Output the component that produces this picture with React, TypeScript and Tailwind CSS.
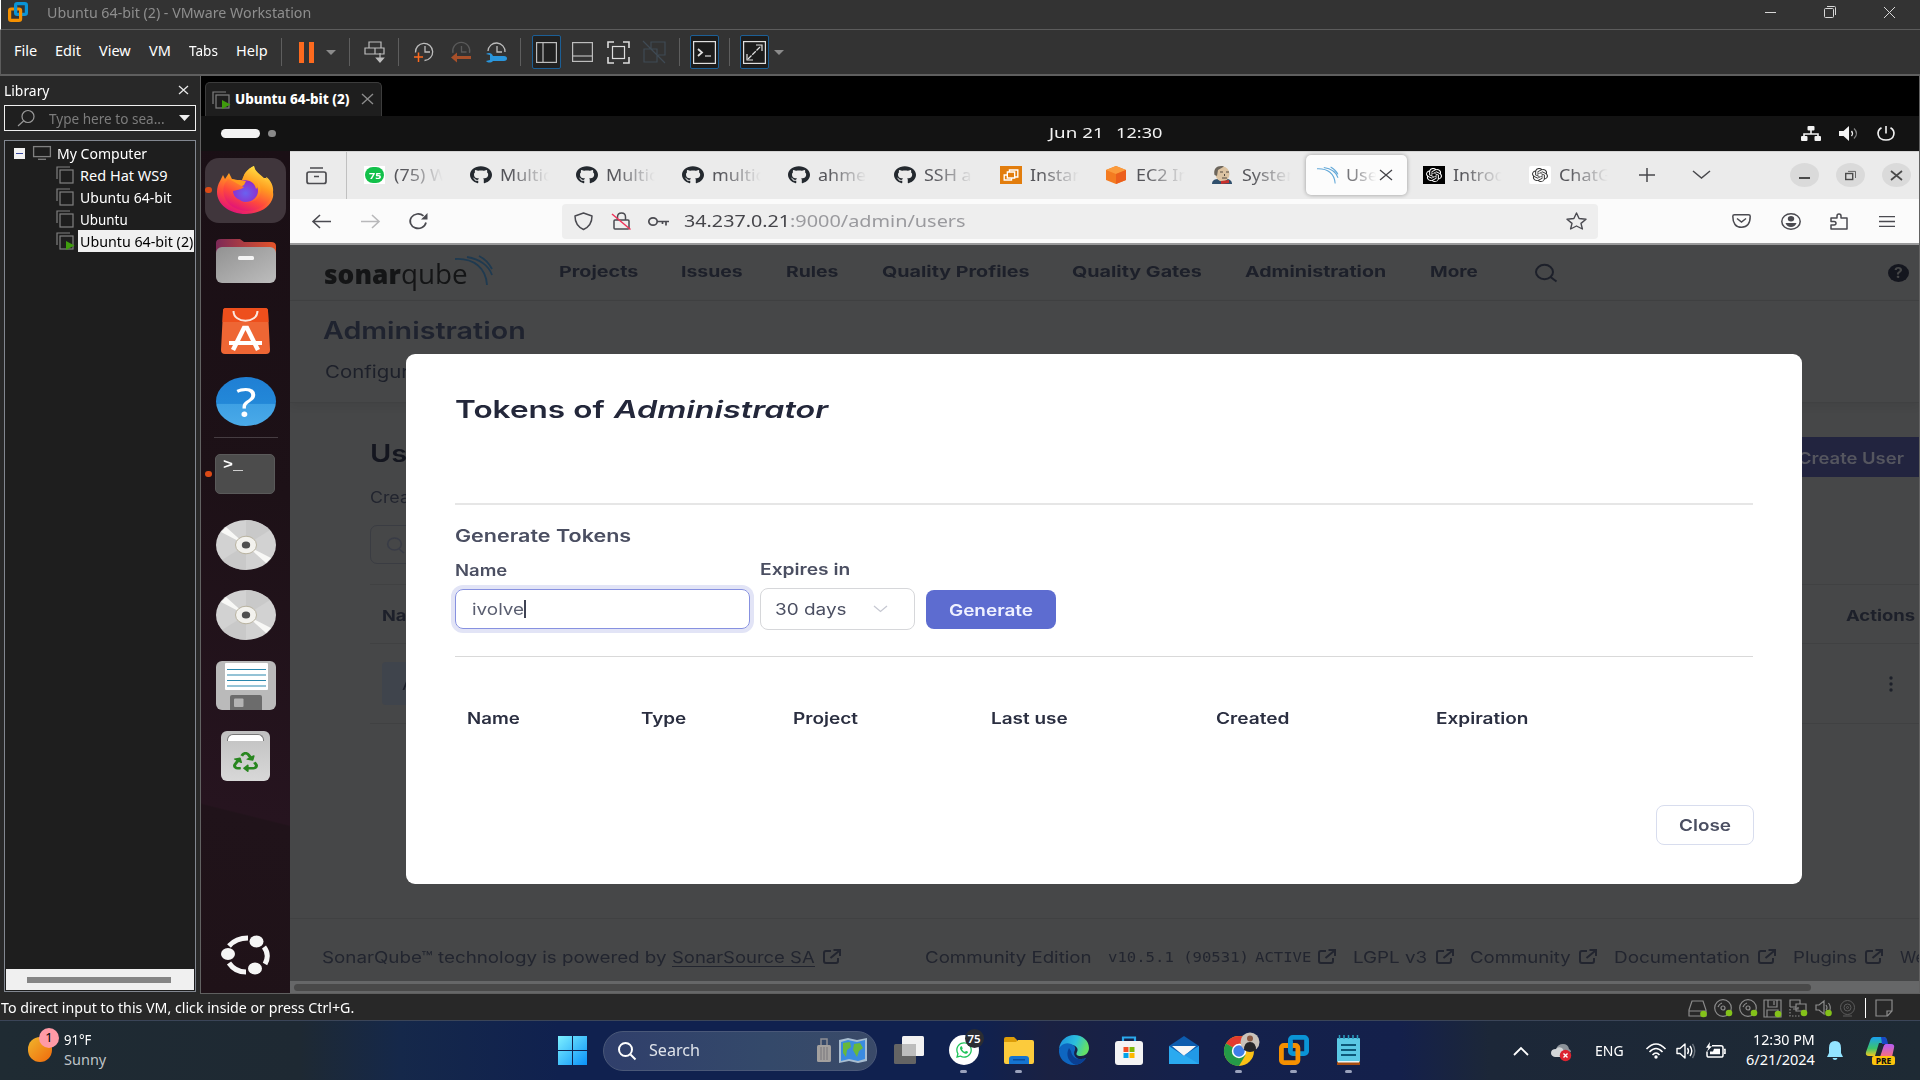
import React, { useLayoutEffect, useRef } from "react";
import { FaGithub, FaWhatsapp, FaRecycle } from "react-icons/fa";
import { SiOpenai } from "react-icons/si";

function T({ children, className = "" }: { children: React.ReactNode; className?: string }) {
  const outer = useRef<HTMLSpanElement>(null);
  const inner = useRef<HTMLSpanElement>(null);
  useLayoutEffect(() => {
    if (outer.current && inner.current) {
      const s = outer.current.clientWidth / inner.current.offsetWidth;
      inner.current.style.transform = `scaleX(${s})`;
    }
  }, []);
  return (
    <span ref={outer} className={"block shrink-0 whitespace-nowrap leading-none " + className}>
      <span ref={inner} className="inline-block origin-left whitespace-pre">{children}</span>
    </span>
  );
}

function Ico({ vb, className = "", children, sw = 1.5 }: { vb: string; className?: string; children: React.ReactNode; sw?: number }) {
  return (
    <svg viewBox={vb} preserveAspectRatio="none" fill="none" stroke="currentColor" strokeWidth={sw} className={"shrink-0 overflow-visible " + className}>
      {children}
    </svg>
  );
}

const VmLogo = ({ className }: { className: string }) => (
  <Ico vb="0 0 20 20" sw={3.2} className={className}>
    <rect x="7.6" y="1.6" width="10.8" height="10.8" rx="1.6" stroke="#0a94d6" />
    <rect x="1.6" y="7" width="11" height="11.4" rx="1.6" stroke="#f59000" />
    <path d="M7.6 9.5V4" stroke="#0a94d6" />
  </Ico>
);

const Sep = ({ className }: { className: string }) => <div className={"h-7 w-px shrink-0 bg-[#5e5e5e] " + className} />;
const Caret = ({ className }: { className: string }) => (
  <Ico vb="0 0 10 5" className={className}><path d="M0 0h10L5 5z" fill="currentColor" stroke="none" /></Ico>
);

function TitleBar() {
  return (
    <div className="flex h-[30px] shrink-0 items-center border-b border-l border-b-[#5c5c5c] border-l-white bg-[#333333] pb-1">
      <VmLogo className="mb-0.5 ml-[7px] h-5 w-5" />
      <T className="ml-[19px] w-[264px] text-[14.5px] text-[#8e8e8e]">Ubuntu 64-bit (2) - VMware Workstation</T>
      <div className="ml-auto mr-[25px] flex items-center gap-12 pb-px text-[#d8d8d8]">
        <Ico vb="0 0 11 11" sw={1} className="h-[11px] w-[11px]"><path d="M0 5.5h11" /></Ico>
        <Ico vb="0 0 12 12" sw={1} className="h-3 w-3"><rect x=".5" y="2.5" width="9" height="9" rx="1" /><path d="M3 .5h7.5a1 1 0 0 1 1 1V9" /></Ico>
        <Ico vb="0 0 11 11" sw={1} className="h-[11px] w-[11px]"><path d="M0 0l11 11M11 0L0 11" /></Ico>
      </div>
    </div>
  );
}

function MenuBar() {
  return (
    <div className="flex h-[46px] shrink-0 items-center border-b-2 border-l border-b-[#5f5f5f] border-l-[#5c5c5c] bg-[#333333] pt-1 text-[14.5px] text-white">
      <T className="mb-2 ml-[13px] w-[23px]">File</T>
      <T className="mb-2 ml-[18px] w-[26px]">Edit</T>
      <T className="mb-2 ml-[18px] w-8">View</T>
      <T className="mb-2 ml-[18px] w-[22px]">VM</T>
      <T className="mb-2 ml-[18px] w-[29px]">Tabs</T>
      <T className="mb-2 ml-[18px] w-8">Help</T>
      <div className="mb-1 flex items-center text-[#bdbdbd]">
        <Sep className="ml-[13px]" />
        <div className="ml-[17px] h-[21px] w-[5px] bg-[#fd6a1e]" />
        <div className="ml-[5px] h-[21px] w-[5px] bg-[#fd6a1e]" />
        <Caret className="ml-3 h-[5px] w-[10px] text-[#8b8b8b]" />
        <Sep className="ml-[13px]" />
        <Ico vb="0 0 21 22" sw={1.2} className="ml-3.5 h-[22px] w-[21px]">
          <path d="M5 7V1h12v6M1 7h10v6H1zM11 7h9v6h-9z" /><path d="M16 12v8M12.5 17l3.5 4 3.5-4z" fill="currentColor" />
        </Ico>
        <Sep className="ml-[13px]" />
        <Ico vb="0 0 20 20" sw={1.3} className="ml-[15px] h-5 w-5">
          <path d="M1.500 10.500a8.600 8.600 0 1 1 9 8" /><path d="M11 4v6h5" /><path d="M0 15h9M4.500 10.500V20" stroke="#fd6a1e" strokeWidth="1.500" />
        </Ico>
        <Ico vb="0 0 20 20" sw={1.3} className="ml-[17px] h-5 w-5">
          <path d="M2 11a8.500 8.500 0 1 1 16.500 0M10.500 4v6h5" stroke="#5a5a5a" /><path d="M5 15.500h15" stroke="#a8502a" strokeWidth="3" /><path d="M6 10.500v10L0 15.500z" fill="#a8502a" stroke="none" />
        </Ico>
        <Ico vb="0 0 21 20" sw={1.3} className="ml-[15px] h-5 w-[21px]">
          <path d="M2 9a8.500 8.500 0 1 1 17 1M11 4v6h5" /><path d="M0 12c3-2 6-1 7 2h11c4 0 4 5 0 5H7c-2 2-5 2-7 0l4-1v-5z" fill="#2a96dc" stroke="none" />
        </Ico>
        <Sep className="ml-[13px]" />
        <div className="ml-[11px] flex h-[34px] w-[29px] items-center justify-center rounded-[2px] border border-[#1c5f96] bg-[#212121]">
          <Ico vb="0 0 21 21" sw={1.2} className="h-[21px] w-[21px]"><rect x=".6" y=".6" width="19.800" height="19.800" /><path d="M7 1v19" /></Ico>
        </div>
        <Ico vb="0 0 21 20" sw={1.2} className="ml-[11px] h-5 w-[21px]"><rect x=".6" y=".6" width="19.800" height="18.800" /><path d="M1 14h19" /></Ico>
        <Ico vb="0 0 23 23" sw={1.6} className="ml-3.5 h-[23px] w-[23px] text-[#dddddd]"><path d="M1 7V1h6M16 1h6v6M22 16v6h-6M7 22H1v-6" /><rect x="5.500" y="5.500" width="12" height="12" strokeWidth="1.200" /></Ico>
        <Ico vb="0 0 23 22" sw={1.2} className="ml-[13px] h-[22px] w-[23px] text-[#3f4a54]"><path d="M8 8V1h14v13h-7M1 8h13v13H1zM0 0l22 22" /></Ico>
        <Sep className="ml-[13px]" />
        <div className="ml-[10px] flex h-[34px] w-[29px] items-center justify-center rounded-[2px] border border-[#1c5f96] bg-[#1c1c1c] text-[#e0e0e0]">
          <Ico vb="0 0 23 23" sw={1.2} className="h-[23px] w-[23px]"><rect x=".6" y=".6" width="21.800" height="21.800" /><path d="M5 8l4 3.500L5 15" strokeWidth="1.800" /><path d="M12 15h6" /></Ico>
        </div>
        <Sep className="ml-[10px]" />
        <div className="ml-[10px] flex h-[34px] w-[29px] items-center justify-center rounded-[2px] border border-[#1c5f96] bg-[#1c1c1c] text-[#e0e0e0]">
          <Ico vb="0 0 23 23" sw={1.2} className="h-[23px] w-[23px]"><rect x=".6" y=".6" width="21.800" height="21.800" /><path d="M13 4h6v6M10 19H4v-6" /><path d="M5 18L18 5" strokeDasharray="5 1" /></Ico>
        </div>
        <Caret className="ml-[5px] h-[5px] w-[10px] text-[#8b8b8b]" />
      </div>
    </div>
  );
}

const VmIcon = ({ on, className = "" }: { on?: boolean; className?: string }) => (
  <Ico vb="0 0 18 18" sw={1.2} className={"h-[18px] w-[18px] text-[#808080] " + className}>
    <path d="M1 13V1h13" /><rect x="4" y="4" width="13" height="13" />
    {on && <path d="M10 9l8.500 4.500-8.500 4.500z" fill="#3f9c0d" stroke="none" />}
  </Ico>
);

function Library() {
  return (
    <div className="flex w-[200px] shrink-0 flex-col bg-[#282828] px-1 pb-[2px] text-[14.5px] text-white">
      <div className="flex h-[29px] items-center">
        <T className="w-[45px]">Library</T>
        <Ico vb="0 0 9 9" sw={1.2} className="ml-[130px] h-[9px] w-[9px] pb-px text-[#e8e8e8]"><path d="M0 0l9 9M9 0L0 9" /></Ico>
      </div>
      <div className="flex h-[26px] w-[192px] items-center border border-[#f0f0f0] bg-[#1f1f1f]">
        <Ico vb="0 0 17 16" sw={1.2} className="ml-[13px] h-4 w-[17px] text-[#9a9a9a]"><circle cx="10" cy="6.500" r="6" /><path d="M5.500 11L0 16" /></Ico>
        <T className="ml-[14px] w-[116px] text-[#7c7c7c]">Type here to sea...</T>
        <Ico vb="0 0 11 6" className="ml-[14px] h-1.5 w-[11px]"><path d="M0 0h11L5.500 6z" fill="#f0f0f0" stroke="none" /></Ico>
      </div>
      <div className="mt-[9px] flex w-[192px] flex-1 flex-col border border-[#828790] bg-[#1e1e1e] pt-px">
        <div className="flex h-[22px] items-center">
          <div className="ml-[9px] flex h-[11px] w-[11px] items-center justify-center bg-[#f2f2f2]"><div className="h-px w-[7px] bg-[#3949a0]" /></div>
          <Ico vb="0 0 18 14" sw={1.3} className="ml-2 h-3.5 w-[18px] text-[#808080]"><rect x=".6" y=".6" width="16.800" height="10" /><path d="M5 13.300h8" /></Ico>
          <T className="ml-1.5 w-[90px]">My Computer</T>
        </div>
        <div className="flex h-[22px] items-center"><VmIcon className="ml-[51px]" /><T className="ml-1.5 w-[88px]">Red Hat WS9</T></div>
        <div className="flex h-[22px] items-center"><VmIcon className="ml-[51px]" /><T className="ml-1.5 w-[92px]">Ubuntu 64-bit</T></div>
        <div className="flex h-[22px] items-center"><VmIcon className="ml-[51px]" /><T className="ml-1.5 w-12">Ubuntu</T></div>
        <div className="flex h-[22px] items-center">
          <VmIcon on className="ml-[51px]" />
          <div className="ml-1 flex h-[22px] w-[116px] items-center bg-[#f0f0f0] pl-0.5 text-black"><T className="w-[113px]">Ubuntu 64-bit (2)</T></div>
        </div>
        <div className="mx-px mb-px mt-auto flex h-[21px] items-center bg-[#f0f0f0]"><div className="ml-[21px] h-1.5 w-36 bg-[#858585]" /></div>
      </div>
    </div>
  );
}

function Firefox() {
  return (
    <Ico vb="0 0 57 48" className="h-12 w-[57px]">
      <defs>
        <linearGradient id="ff1" x1=".8" y1="0" x2=".3" y2="1"><stop offset="0" stopColor="#fff04a" /><stop offset=".4" stopColor="#ff9a20" /><stop offset=".7" stopColor="#ff4a3c" /><stop offset="1" stopColor="#e0107c" /></linearGradient>
        <radialGradient id="ff2" cx=".5" cy=".6" r=".6"><stop offset="0" stopColor="#6a62f0" /><stop offset="1" stopColor="#9228c8" /></radialGradient>
      </defs>
      <g stroke="none">
        <path d="M3 15l3-6 2 4 4-6 3 6c4 1 7 1 10 1 2-6 6-11 12-14 1 7 6 9 9 12l3 0c6 6 8 14 7 19C54 41 42 48 29 48 12 48 0 38 0 26c0-4 1-8 3-11z" fill="url(#ff1)" />
        <ellipse cx="28.500" cy="25" rx="12.500" ry="11" fill="url(#ff2)" />
        <path d="M15 13c4 2 10 1 14 2l-2 4c-3 2-7 2-9 4-3 0-5-5-3-10z" fill="#ff9c1e" />
        <path d="M37 0c-7 3-12 9-10 14 6 0 11 3 12 9 3-3 2-6 1-8 5 5 5 13 0 18-4 4-13 5-17 1-5-2-8-6-7-9 3-1 8-1 11-4-4-1-9-6-16-8l-3 4c-4 8-1 20 10 25 16 8 36-1 38-16 1-6-3-13-7-15l1 5c-4-7-12-9-13-16z" fill="url(#ff1)" />
      </g>
    </Ico>
  );
}

const Disc = ({ className }: { className: string }) => (
  <Ico vb="0 0 60 50" className={"h-[50px] w-[60px] " + className}>
    <g stroke="none">
      <ellipse cx="30" cy="25" rx="30" ry="25" fill="#d2d2d2" />
      <path d="M30 25V0c9 0 18 4 24 10zM30 25v25c-9 0-18-4-24-10z" fill="#c4c4c4" opacity=".7" />
      <path d="M30 25L5 12l5-5zM30 25l25 13-5 5z" fill="#f8f8f6" />
      <ellipse cx="30" cy="25" rx="10.500" ry="8.800" fill="#f3f2ee" stroke="#b9b3a0" strokeWidth="1" />
      <ellipse cx="30" cy="25" rx="4.200" ry="3.500" fill="#505050" />
    </g>
  </Ico>
);

function Dock() {
  return (
    <div className="flex w-[89px] shrink-0 flex-col items-center bg-[linear-gradient(194deg,#1a0f15_0%,#1d1117_40%,#26141f_78%,#20131a_78.200%,#1f1218_100%)] pt-[7px]">
      <div className="flex w-full items-center">
        <div className="ml-1 h-[65px] w-[81px] shrink-0 rounded-[14px] bg-[#40363c] pl-0 pt-2">
          <div className="flex items-center"><div className="h-1.5 w-[7px] rounded-full bg-[#dc4a16]" /><div className="ml-[5px]"><Firefox /></div></div>
        </div>
      </div>
      <Ico vb="0 0 60 44" className="mt-4 h-11 w-[60px]">
        <defs>
          <linearGradient id="fo" x1="0" x2="1"><stop offset="0" stopColor="#7c2957" /><stop offset="1" stopColor="#e4542a" /></linearGradient>
          <linearGradient id="fg" x1="0" y1="0" x2="1" y2="1"><stop offset="0" stopColor="#929292" /><stop offset="1" stopColor="#bdbdbd" /></linearGradient>
        </defs>
        <path d="M0 4q0-4 5-4h19l4 3h27q5 0 5 4v20H0z" fill="url(#fo)" stroke="none" />
        <rect y="8" width="60" height="36" rx="6" fill="url(#fg)" stroke="none" />
        <rect x="22" y="17" width="16" height="4" rx="1.500" fill="#f4f4f4" stroke="none" />
      </Ico>
      <Ico vb="0 0 49 46" className="mt-[25px] h-[46px] w-[49px]">
        <path d="M5 0h39q3 0 3 3l2 39q0 4-4 4H4q-4 0-4-4L2 3q0-3 3-3z" fill="#ee6634" stroke="none" />
        <path d="M5 0h39q3 0 3 3l.5 11H1.500L2 3q0-3 3-3z" fill="#ee4f1c" stroke="none" />
        <path d="M12.500 3c0 13 24 13 24 0" stroke="#fbe9e0" strokeWidth="2" />
        <path d="M12 42L23 20h3l11 22" stroke="#fff" strokeWidth="4.500" /><path d="M8 35h33" stroke="#fff" strokeWidth="4" />
      </Ico>
      <div className="mt-[23px] flex h-[49px] w-[60px] items-center justify-center rounded-[50%] bg-[linear-gradient(#1f7fd4_0%,#2388d8_54%,#3ea0e4_55%,#4aaae8_100%)]">
        <T className="w-5 text-[40px] text-white">?</T>
      </div>
      <div className="mt-[11px] h-px w-16 bg-[#463d42]" />
      <div className="mt-4 flex w-full items-center">
        <div className="ml-1 h-1.5 w-[7px] rounded-full bg-[#dc4a16]" />
        <div className="ml-[3px] flex h-10 w-[60px] items-start rounded-[5px] border border-[#5a5a5a] bg-[#4c4c4c] pl-[7px] pt-[3px]">
          <T className="w-5 font-['Liberation_Mono'] text-[15px] font-bold text-white">&gt;_</T>
        </div>
      </div>
      <Disc className="mt-[26px]" />
      <Disc className="mt-5" />
      <Ico vb="0 0 60 49" className="mt-[21px] h-[49px] w-[60px]">
        <rect width="60" height="49" rx="6" fill="#bababa" stroke="none" />
        <rect x="9" y="2" width="43" height="27" rx="1" fill="#fff" stroke="none" />
        <path d="M11 8.500h39M11 14h39M11 19.500h39M11 25h39" stroke="#2a88ae" strokeWidth="1.200" />
        <path d="M14 49V36q0-2 2-2h28q2 0 2 2v13z" fill="#6c6c6c" stroke="none" /><rect x="18" y="37.500" width="9.500" height="8.500" rx="1" fill="#b4b4b4" stroke="none" />
      </Ico>
      <div className="mt-[21px] flex h-[50px] w-[49px] flex-col items-center rounded-[6px] bg-[linear-gradient(#c0c0c0,#d8d8d8)] pt-[3px]">
        <div className="h-[7px] w-[37px] rounded-t-[6px] border border-b-0 border-[#777777] bg-white" />
        <FaRecycle preserveAspectRatio="none" className="mt-[11px] h-5 w-[25px] text-[#28861f]" />
      </div>
      <Ico vb="0 0 49 40" sw={5} className="mb-[18px] mt-auto h-10 w-[49px] text-[#f5f5f5]">
        <path d="M8 11Q15 3 27 3M8 28q6 9 17 9M43 12q6 8 1 17" />
        <g fill="currentColor" stroke="none"><ellipse cx="7" cy="19" rx="7" ry="6" /><ellipse cx="35.500" cy="6.500" rx="7" ry="6" /><ellipse cx="34" cy="33.500" rx="7" ry="6" /></g>
      </Ico>
    </div>
  );
}

const Waves = ({ className }: { className: string }) => (
  <Ico vb="0 0 37 30" sw={1.8} className={className}><path d="M0 3c19-1 31 9 32 26M12 1c13 2 22 9 25 18M24 0c6 3 10 7 13 13" /></Ico>
);

const Label = ({ children, className = "w-[50px]" }: { children: React.ReactNode; className?: string }) => (
  <div className={"ml-2 shrink-0 overflow-hidden whitespace-nowrap text-[16px] text-[#55555a] [mask-image:linear-gradient(to_right,black_20%,transparent_98%)] " + className}>
    <span className="inline-block origin-left scale-x-[1.12] pb-0.5 leading-5">{children}</span>
  </div>
);
const Tab = ({ icon, label }: { icon: React.ReactNode; label: string }) => (
  <div className="flex w-[106px] shrink-0 items-center"><div className="w-[22px] shrink-0">{icon}</div><Label>{label}</Label></div>
);
const Gh = () => <FaGithub preserveAspectRatio="none" className="h-[18px] w-[22px] text-[#24292f]" />;

function BrowserTabs() {
  return (
    <div className="flex h-12 shrink-0 items-center border-t border-[#d4d4d4] bg-[#ebebeb] pb-px">
      <Ico vb="0 0 21 17" sw={1.7} className="ml-4 h-[17px] w-[21px] text-[#4c4c50]"><rect x="1" y="5" width="19" height="11.500" rx="2" /><path d="M4 1h13M8 9.500h5" /></Ico>
      <div className="-mb-px ml-[19px] h-12 w-px bg-[#c0c0c0]" />
      <div className="ml-[17px] flex">
        <Tab label="(75) W" icon={<div className="flex h-[18px] w-[21px] items-center justify-center bg-white"><div className="flex h-4 w-[19px] items-center justify-center rounded-full bg-[#12c04a]"><T className="w-3 text-[9px] font-bold text-white">75</T></div></div>} />
        <Tab label="Multic" icon={<Gh />} />
        <Tab label="Multic" icon={<Gh />} />
        <Tab label="multic" icon={<Gh />} />
        <Tab label="ahmed" icon={<Gh />} />
        <Tab label="SSH an" icon={<Gh />} />
        <Tab label="Instan" icon={<Ico vb="0 0 21 18" sw={1.3} className="h-[18px] w-[22px] bg-[#e27d0d] text-white"><path d="M9 6V4h8v7h-3M7 6h7v6H7zM7 9H4v5h7v-2" /></Ico>} />
        <Tab label="EC2 In" icon={<Ico vb="0 0 20 18" className="h-[18px] w-5"><g stroke="none"><path d="M10 0l10 4v10l-10 4L0 14V4z" fill="#f47b20" /><path d="M10 0l10 4-10 4L0 4z" fill="#fb9b3c" /><path d="M20 4v10l-10 4V8z" fill="#ec5f1c" /></g></Ico>} />
        <Tab label="System" icon={<Ico vb="0 0 20 18" className="h-[18px] w-5"><g stroke="none"><path d="M0 18c0-4 3-5 7-5h7c4 0 6 2 6 5z" fill="#2f4f6c" /><ellipse cx="10.500" cy="8" rx="7" ry="7.500" fill="#dcc3a2" /><path d="M2.500 9C1 2 6-1 12 .5L6 4l-1 6z" fill="#6d665c" /><path d="M9 15l8-1v3l-8 1z" fill="#c8302c" /><path d="M8 5.500h3v1H8zM14 5.500h3v1h-3zM12 8h1v2h-1zM10 11.500h5v1h-5z" fill="#544a40" /></g></Ico>} />
      </div>
      <div className="-ml-3 flex h-10 w-[101px] shrink-0 items-center rounded-[5px] bg-[#fcfcfc] shadow-[0_0_4px_rgba(0,0,0,0.35)]">
        <Waves className="ml-[11px] h-[17px] w-[21px] text-[#62a8d8]" />
        <Label className="w-[31px] opacity-80">Users</Label>
        <Ico vb="0 0 12 10" sw={1.3} className="ml-[3px] h-[10px] w-3 text-[#44444a]"><path d="M0 0l12 10M12 0L0 10" /></Ico>
      </div>
      <div className="ml-4 flex">
        <Tab label="Introd" icon={<div className="flex h-[18px] w-[22px] items-center justify-center bg-black"><SiOpenai preserveAspectRatio="none" className="h-3.5 w-4 text-white" /></div>} />
        <Tab label="ChatG" icon={<div className="flex h-[18px] w-[22px] items-center justify-center rounded-[2px] bg-white"><SiOpenai preserveAspectRatio="none" className="h-3.5 w-4 text-[#333333]" /></div>} />
      </div>
      <Ico vb="0 0 16 14" sw={1.5} className="ml-1 h-3.5 w-4 text-[#48484c]"><path d="M8 0v14M0 7h16" /></Ico>
      <Ico vb="0 0 17 8" sw={1.5} className="ml-[38px] h-2 w-[17px] text-[#48484c]"><path d="M0 0l8.500 7L17 0" /></Ico>
      <div className="ml-auto mr-2 flex gap-[17px] text-[#4a4a4a]">
        <div className="flex h-6 w-[29px] items-center justify-center rounded-[50%] bg-[#dadada]"><div className="mt-1.5 h-[1.5px] w-[11px] bg-[#4a4a4a]" /></div>
        <div className="flex h-6 w-[29px] items-center justify-center rounded-[50%] bg-[#dadada]"><Ico vb="0 0 11 9" sw={1.4} className="h-[9px] w-[11px]"><rect x=".7" y="2.500" width="7" height="6" /><path d="M3 .4h7.500V7" strokeWidth=".8" /></Ico></div>
        <div className="flex h-6 w-[29px] items-center justify-center rounded-[50%] bg-[#dadada]"><Ico vb="0 0 11 9" sw={1.7} className="h-[9px] w-[11px]"><path d="M0 0l11 9M11 0L0 9" /></Ico></div>
      </div>
    </div>
  );
}

function Toolbar() {
  return (
    <div className="flex h-[46px] shrink-0 items-center border-b-2 border-[#9a9a9b] bg-[#fbfbfb] text-[#4a4a50]">
      <Ico vb="0 0 19 13" sw={1.6} className="ml-[22px] h-[13px] w-[19px]"><path d="M19 6.500H1M8 0L1 6.500 8 13" /></Ico>
      <Ico vb="0 0 19 13" sw={1.6} className="ml-[30px] h-[13px] w-[19px] text-[#b8b8ba]"><path d="M0 6.500h18M11 0l7 6.500L11 13" /></Ico>
      <Ico vb="0 0 19 16" sw={1.7} className="ml-[29px] h-4 w-[19px]"><path d="M17 9.500A8 7.200 0 1 1 14.500 2.800" /><path d="M18.500 0v6.500H12z" fill="currentColor" stroke="none" /></Ico>
      <div className="ml-[134px] flex h-[35px] w-[1036px] items-center rounded-[4px] bg-[#eeeeee]">
        <Ico vb="0 0 19 18" sw={1.5} className="ml-3 h-[18px] w-[19px]"><path d="M9.500 1l8.500 3c0 7-3 11-8.500 13.500C4 15 1 11 1 4z" strokeLinejoin="round" /></Ico>
        <Ico vb="0 0 19 18" sw={1.5} className="ml-[19px] h-[18px] w-[19px]"><path d="M5.500 8V5q0-4 4-4t4 4v3" /><rect x="2" y="8" width="15" height="9" rx="1" /><path d="M0 2l18.500 15.500" stroke="#f0335a" /></Ico>
        <Ico vb="0 0 21 9" sw={1.7} className="ml-[17px] h-[9px] w-[21px]"><ellipse cx="5" cy="4.500" rx="4.200" ry="3.700" /><path d="M9 4.500h12M18 4.500v4M14.500 4.500v2.500" /></Ico>
        <T className="ml-[15px] w-[106px] text-[16px] text-[#45454a]">34.237.0.21</T>
        <T className="w-[175px] text-[16px] text-[#9a9a9e]">:9000/admin/users</T>
        <Ico vb="0 0 21 18" sw={1.4} className="ml-auto mr-[11px] h-[18px] w-[21px]"><path d="M10.500 1l2.600 5.500 6.900.7-5 4.200 1.400 5.600-5.900-3-5.900 3 1.400-5.600-5-4.200 6.900-.7z" strokeLinejoin="round" /></Ico>
      </div>
      <Ico vb="0 0 19 14" sw={1.5} className="ml-[134px] h-3.5 w-[19px]"><path d="M2.500.8h14q1.700 0 1.700 1.500c0 7-3 11-8.700 11S.8 9.300.8 2.300Q.8.8 2.500.8z" /><path d="M5 4.500l4.500 3.500L14 4.500" /></Ico>
      <Ico vb="0 0 20 17" sw={1.5} className="ml-[30px] h-[17px] w-5"><ellipse cx="10" cy="8.500" rx="9.200" ry="7.800" /><ellipse cx="10" cy="5.800" rx="3.200" ry="2.700" fill="currentColor" stroke="none" /><path d="M4.500 10h11q-1.500 4-5.500 4t-5.500-4z" fill="currentColor" stroke="none" /></Ico>
      <Ico vb="0 0 18 17" sw={1.5} className="ml-[29px] h-[17px] w-[18px]"><path d="M1 16v-4h3q2 0 2-1.700T4 8.500H1V5h6V3q0-2 2-2t2 2v2h6v11z" strokeLinejoin="round" /></Ico>
      <Ico vb="0 0 16 11" sw={1.3} className="ml-[31px] h-[11px] w-4"><path d="M0 .7h16M0 5.500h16M0 10.300h16" /></Ico>
    </div>
  );
}

const Ext = ({ className }: { className: string }) => (
  <Ico vb="0 0 18 15" sw={2} className={"mb-0.5 h-[15px] w-[18px] " + className}><path d="M8 2H3q-2 0-2 2v8q0 2 2 2h10q2 0 2-2V9" /><path d="M7.500 9L16 2M10.500 1H17v6" /></Ico>
);

function Page() {
  return (
    <div className="flex h-[736px] shrink-0 flex-col bg-[#464748] font-['Inter'] text-[#1d202a]">
      <div className="flex h-14 shrink-0 items-center border-b border-[#404142] text-[15px] font-bold">
        <div className="ml-[34px] flex items-center pt-px font-['Open_Sans'] text-[27px] text-[#141516]"><T className="w-[77px] font-extrabold">sonar</T><T className="w-[67px] font-normal">qube</T></div>
        <Waves className="-ml-[13px] mb-[3px] h-[30px] w-[37px] text-[#1f3a50]" />
        <div className="flex items-center pb-[2px]">
          <T className="ml-[67px] w-[79px]">Projects</T>
          <T className="ml-[43px] w-[62px]">Issues</T>
          <T className="ml-[43px] w-[53px]">Rules</T>
          <T className="ml-[43px] w-[147px]">Quality Profiles</T>
          <T className="ml-[43px] w-[130px]">Quality Gates</T>
          <T className="ml-[43px] w-[141px]">Administration</T>
          <T className="ml-11 w-12">More</T>
        </div>
        <Ico vb="0 0 22 18" sw={2} className="ml-[57px] h-[18px] w-[22px]"><ellipse cx="9.500" cy="8" rx="8.500" ry="7.200" /><path d="M15.500 13l6 4.500" /></Ico>
        <div className="ml-[331px] flex h-[18px] w-[21px] shrink-0 items-center justify-center rounded-[50%] bg-[#14161e] text-[#464748]"><T className="w-[9px] text-[14px] font-bold">?</T></div>
      </div>
      <div className="flex h-[102px] shrink-0 flex-col border-b border-[#404142] pl-[33px] pt-[18px] shadow-[0_4px_8px_rgba(0,0,0,0.06)]">
        <T className="w-[203px] text-[24px] font-semibold text-[#1f232f]">Administration</T>
        <T className="ml-0.5 mt-[21px] w-[84px] text-[17px]">Configur</T>
      </div>
      <div className="flex flex-1 flex-col pl-[80px] pt-[34px]">
        <div className="flex h-10 items-center">
          <T className="mb-1.5 w-[82px] text-[24px] font-semibold text-[#14161f]">Users</T>
          <div className="ml-auto flex h-10 w-[130px] items-center bg-[#22243f] pt-0.5 text-[16px] font-semibold text-[#55565f]"><T className="ml-[9px] w-[106px]">Create User</T></div>
        </div>
        <div className="flex h-10 items-center pt-0.5 text-[15.5px] text-[#22252f]"><T className="w-[236px]">Create and administer users</T></div>
        <div className="mt-2 flex h-[39px] w-[300px] items-center rounded-[7px] border border-[#3a3c42]"><Ico vb="0 0 18 16" sw={1.6} className="ml-4 h-4 w-[18px] text-[#393c46]"><ellipse cx="7.500" cy="7" rx="6.800" ry="6" /><path d="M12 12l5 4" /></Ico></div>
        <div className="mt-5 flex h-[59px] items-center border-t border-[#404142] pt-0.5 text-[15px] font-bold">
          <T className="ml-3 w-[52px]">Name</T>
          <T className="ml-auto mr-1 w-[69px]">Actions</T>
        </div>
        <div className="flex h-[81px] items-center border-y border-[#404142]">
          <div className="ml-3 flex h-[43px] w-[52px] items-center rounded-[4px] bg-[#3f444c] pl-5 pt-0.5 text-[17px]"><T className="w-[14px]">A</T></div>
          <Ico vb="0 0 4 16" className="ml-auto mr-[26px] h-4 w-1"><g fill="currentColor" stroke="none"><circle cx="2" cy="2" r="1.700" /><circle cx="2" cy="8" r="1.700" /><circle cx="2" cy="14" r="1.700" /></g></Ico>
        </div>
      </div>
      <div className="flex h-[63px] shrink-0 items-center overflow-hidden border-t border-[#404142] pt-3.5 text-[16px] text-[#22252f]">
        <T className="ml-8 w-[345px]">SonarQube™ technology is powered by</T>
        <div className="-mb-0.5 ml-[5px] border-b border-[#22252f] pb-px"><T className="w-[143px]">SonarSource SA</T></div>
        <Ext className="ml-2" />
        <T className="ml-[84px] w-[167px]">Community Edition</T>
        <T className="ml-4 w-[141px] font-['DejaVu_Sans_Mono'] text-[14.5px]">v10.5.1 (90531)</T>
        <T className="ml-[6px] w-[56px] font-['DejaVu_Sans_Mono'] text-[14.5px]">ACTIVE</T>
        <Ext className="ml-[7px]" />
        <T className="ml-[17px] w-[74px]">LGPL v3</T>
        <Ext className="ml-[9px]" />
        <T className="ml-[16px] w-[101px]">Community</T>
        <Ext className="ml-2" />
        <T className="ml-[17px] w-[136px]">Documentation</T>
        <Ext className="ml-2" />
        <T className="ml-[17px] w-[64px]">Plugins</T>
        <Ext className="ml-2" />
        <T className="ml-[17px] w-[66px]">Web API</T>
      </div>
    </div>
  );
}

function Modal() {
  return (
    <div className="absolute left-[116px] top-[109px] flex h-[530px] w-[1396px] flex-col rounded-[9px] bg-white px-[49px] font-['Inter'] text-[#4b4f62]">
      <div className="mt-[44px] flex text-[24px] font-semibold text-[#23273a]">
        <T className="w-[150px]">Tokens of</T>
        <T className="ml-[9px] w-[214px] italic">Administrator</T>
      </div>
      <div className="mt-[81px] h-[1.5px] w-full shrink-0 bg-[#e6e6e6]" />
      <T className="mt-[23px] w-[176px] text-[17px] font-semibold">Generate Tokens</T>
      <div className="mt-[15px] flex">
        <div>
          <T className="mt-[2px] w-[52px] text-[16px] font-semibold">Name</T>
          <div className="mt-[11px] flex h-[40px] w-[295px] items-center rounded-[8px] border border-[#8791e0] pl-4 text-[16px] text-[#5a5e70] shadow-[0_0_0_4px_#e2e4f6]">
            <T className="w-[52px]">ivolve</T>
            <div className="h-[18px] w-[1.5px] bg-[#3f4354]" />
          </div>
        </div>
        <div className="ml-[10px]">
          <T className="mt-[1px] w-[90px] text-[16px] font-semibold">Expires in</T>
          <div className="mt-[11px] flex h-[42px] w-[155px] items-center rounded-[8px] border border-[#d6d7da] pl-[14px] text-[16px]">
            <T className="w-[71px]">30 days</T>
            <Ico vb="0 0 13 6" sw={1.3} className="ml-7 h-1.5 w-[13px] text-[#c6c8d2]"><path d="M0 0l6.500 5.500L13 0" /></Ico>
          </div>
        </div>
        <div className="ml-[11px] mt-[30px] flex h-[39px] w-[130px] items-center justify-center rounded-[8px] bg-[#5d6cd0] pt-0.5 text-[16px] font-semibold text-[#eff1ff]">
          <T className="w-[84px]">Generate</T>
        </div>
      </div>
      <div className="mt-[26px] h-px w-full shrink-0 bg-[#d9d9d9]" />
      <div className="mt-[54px] flex pl-3 text-[15.5px] font-semibold text-[#2a2e40]">
        <T className="w-[53px]">Name</T>
        <T className="ml-[121px] w-[45px]">Type</T>
        <T className="ml-[107px] w-[65px]">Project</T>
        <T className="ml-[133px] w-[77px]">Last use</T>
        <T className="ml-[148px] w-[74px]">Created</T>
        <T className="ml-[146px] w-[92px]">Expiration</T>
      </div>
      <div className="-mr-px mb-[39px] ml-auto mt-auto flex h-[40px] w-[98px] items-center justify-center rounded-[8px] border border-[#d8ddee] text-[16px] font-semibold">
        <T className="w-[52px]">Close</T>
      </div>
    </div>
  );
}

function GuestScreen() {
  return (
    <div className="flex flex-1 flex-col border-x border-[#626262]">
      <div className="flex h-10 shrink-0 items-end bg-black pl-1">
        <div className="flex h-[34px] w-[177px] items-center rounded-t-[5px] border border-b-0 border-[#3c3c3c] bg-[#1e1e1e]">
          <VmIcon on className="ml-1.5" />
          <T className="ml-[5px] w-[114px] text-[13.5px] font-extrabold text-white">Ubuntu 64-bit (2)</T>
          <Ico vb="0 0 11 11" sw={1.3} className="ml-[13px] h-[11px] w-[11px] pb-px text-[#8c8c8c]"><path d="M0 0l11 11M11 0L0 11" /></Ico>
        </div>
      </div>
      <div className="flex h-[35px] shrink-0 items-center bg-[#131313] text-[#f2f2f2]">
        <div className="ml-5 h-[9px] w-[39px] rounded-full bg-[#f4f4f4]" />
        <div className="ml-2 h-[7px] w-2 rounded-full bg-[#8a8a8a]" />
        <T className="mb-0.5 ml-[773px] w-[55px] text-[15px]">Jun 21</T>
        <T className="mb-0.5 ml-3 w-[46px] text-[15px]">12:30</T>
        <Ico vb="0 0 20 15" sw={1.6} className="ml-auto h-[15px] w-5"><path d="M10 4v4M3 11V8h14v3" /><g fill="currentColor" stroke="none"><rect x="6.500" width="7" height="4.500" rx="1" /><rect y="10" width="6.500" height="5" rx="1" /><rect x="13.500" y="10" width="6.500" height="5" rx="1" /></g></Ico>
        <Ico vb="0 0 20 15" sw={1.3} className="ml-[18px] h-[15px] w-5"><path d="M0 5h4.500L10 0v15l-5.500-5H0z" fill="currentColor" stroke="none" /><path d="M12.500 5q2 2.500 0 5" /><path d="M15 2.500q5 5 0 10" opacity=".5" /></Ico>
        <Ico vb="0 0 18 15" sw={1.6} className="ml-[18px] mr-6 h-[15px] w-[18px]"><path d="M9 0v7.500M4.500 1.800C-1 5 0 14 9 14s10-9 4.500-12.200" /></Ico>
      </div>
      <div className="flex h-[843px] shrink-0 border-b border-[#5f5f5f]">
        <Dock />
        <div className="flex w-[1629px] shrink-0 flex-col overflow-hidden">
          <BrowserTabs />
          <Toolbar />
          <div className="relative">
            <Page />
            <Modal />
          </div>
          <div className="flex flex-1 items-center bg-[#666768] pl-1"><div className="h-[7px] w-[1517px] rounded-full bg-[#494949]" /></div>
        </div>
      </div>
    </div>
  );
}

const Dot = ({ x = 15, y = 14 }: { x?: number; y?: number }) => <circle cx={x} cy={y} r="3.300" fill="#84c21a" stroke="none" />;

function StatusBar() {
  return (
    <div className="flex h-[26px] shrink-0 items-center bg-[#282828] text-[#8c8c8c]">
      <T className="ml-px mt-0.5 w-[353px] text-[14px] text-white">To direct input to this VM, click inside or press Ctrl+G.</T>
      <div className="ml-auto mr-[27px] mt-[2px] flex items-center">
        <Ico vb="0 0 19 17" sw={1.2} className="h-[17px] w-[19px]"><path d="M1 10L4 1h11l3 9v6H1zM1 11h17" /><Dot x={15.5} /></Ico>
        <Ico vb="0 0 18 18" sw={1.2} className="ml-[7px] h-[18px] w-[18px]"><circle cx="9" cy="9" r="8.300" /><circle cx="9" cy="9" r="2" /><path d="M4 8q1-3 4-4" /><Dot /></Ico>
        <Ico vb="0 0 18 18" sw={1.2} className="ml-[7px] h-[18px] w-[18px]"><circle cx="9" cy="9" r="8.300" /><circle cx="9" cy="9" r="2" /><path d="M4 8q1-3 4-4" /><Dot /></Ico>
        <Ico vb="0 0 19 19" sw={1.2} className="ml-[6px] h-[19px] w-[19px]"><path d="M1 1h17v17H1zM5 1v7h9V1M11 2v4M4 18v-7h11v7" /><Dot y={15} /></Ico>
        <Ico vb="0 0 18 18" sw={1.2} className="ml-[7px] h-[18px] w-[18px]"><path d="M1 8V1h10v4M7 5h10v7H7zM1 8h6" /><path d="M1 10v7h10" strokeDasharray="1.500 1.500" /><path d="M9 8v2H4" /><Dot /></Ico>
        <Ico vb="0 0 17 16" sw={1.2} className="ml-[8px] h-4 w-[17px]"><path d="M1 5h3l5-4v13l-5-4H1zM11 5q2 3 0 5M13.500 3q3 4 1 8" /><Dot x={13.5} y={13} /></Ico>
        <Ico vb="0 0 15 17" sw={1} className="ml-2 h-[17px] w-[15px] text-[#5c5c5c]"><circle cx="7.500" cy="7.500" r="7" /><circle cx="7.500" cy="7.500" r="3.500" /><circle cx="7.500" cy="7.500" r="1" /><path d="M3 16h9" /></Ico>
        <div className="ml-[10px] h-5 w-[1.5px] bg-white" />
        <Ico vb="0 0 18 18" sw={1.2} className="ml-[9px] h-[18px] w-[18px]"><path d="M1 1h16v11l-4.500 5H1zM12 17v-5h5" /></Ico>
      </div>
    </div>
  );
}

const TaskApp = ({ children, run, className = "" }: { children: React.ReactNode; run?: boolean; className?: string }) => (
  <div className={"flex h-full w-[55px] shrink-0 flex-col items-center pt-[13px] " + className}>
    <div className="flex h-[32px] items-center">{children}</div>
    {run && <div className="mt-1 h-[3px] w-[7px] rounded-full bg-[#9aa2bc]" />}
  </div>
);

function Taskbar() {
  return (
    <div className="flex h-[60px] shrink-0 items-center overflow-hidden border-t border-[#3b4558] bg-[linear-gradient(90deg,#1f2b33_0px,#1e2933_300px,#15284a_400px,#10214f_560px,#10214f_980px,#1a2142_1050px,#14214c_1200px,#14204b_1400px,#1c2738_1490px,#1e2a34_1920px)] text-[14.5px] text-white">
      <div className="relative ml-7 h-9 w-[31px] shrink-0">
        <div className="mt-1 h-[25px] w-6 rounded-full bg-[linear-gradient(135deg,#f0b62c,#f0690c)]" />
        <div className="absolute -top-[5px] left-[11px] flex h-5 w-5 items-center justify-center rounded-full bg-[#ff9aa6] text-[13px] leading-none text-black">1</div>
      </div>
      <div className="mb-[3px] ml-[5px] w-[42px] shrink-0"><T className="w-[27px]">91°F</T><T className="mt-[5px] w-[42px] text-[#bfc4c8]">Sunny</T></div>
      <Ico vb="0 0 29 29" className="ml-[452px] h-[29px] w-[29px]">
        <defs><linearGradient id="ws" x1="0" y1="0" x2="1" y2="1"><stop offset="0" stopColor="#7df0ff" /><stop offset="1" stopColor="#0a92f8" /></linearGradient></defs>
        <path d="M0 0h14v14H0zM15 0h14v14H15zM0 15h14v14H0zM15 15h14v14H15z" fill="url(#ws)" stroke="none" />
      </Ico>
      <div className="ml-4 flex h-10 w-[274px] shrink-0 items-center rounded-full border border-[#4a5878] bg-[linear-gradient(90deg,#303f6b,#34496a_60%,#3a4a68)]">
        <Ico vb="0 0 18 18" sw={2} className="ml-3.5 h-[18px] w-[18px]"><circle cx="7.500" cy="7.500" r="6.500" /><path d="M12.500 12.500l5 5" /></Ico>
        <T className="ml-[13px] w-[51px] text-[15.5px] text-[#dfe3ea]">Search</T>
        <Ico vb="0 0 14 25" className="ml-[117px] h-[25px] w-3.5"><path d="M4 7V1h6v6" stroke="#8e8e94" /><rect y="7" width="14" height="17" rx="1.500" fill="#a3a09e" stroke="none" /><path d="M4 9v13M7 9v13M10 9v13" stroke="#77757a" strokeWidth="1" /></Ico>
        <Ico vb="0 0 28 25" className="ml-2 h-[25px] w-7"><g stroke="none"><path d="M0 2l9-2 9 2 10-2v23l-9 2-9-2-10 2z" fill="#a8bdd0" /><path d="M2 4l7-2 9 2 8-2v19l-7 2-9-2-8 2z" fill="#3a8be0" /><path d="M4 5l7-1 1 5-4 3-1 7-3-4zM15 6l6-1 3 5-4 3-2 6-4-7z" fill="#68b83c" /></g></Ico>
      </div>
      <TaskApp className="ml-[4px]">
        <Ico vb="0 0 30 28" className="h-7 w-[30px]"><rect y="8" width="22" height="20" rx="1.500" fill="#646464" stroke="none" /><rect x="8" width="22" height="20" rx="1.500" fill="#f2f2f2" stroke="none" /><path d="M8 8h14v12H8z" fill="#bdbdbd" stroke="none" /></Ico>
      </TaskApp>
      <TaskApp run>
        <div className="relative"><div className="flex h-[30px] w-[30px] items-center justify-center rounded-full bg-white"><FaWhatsapp className="h-[18px] w-[18px] text-[#1fc45a]" /></div>
          <div className="absolute -right-[5px] -top-[6px] flex h-[19px] w-[19px] items-center justify-center rounded-full bg-[#2a2d33]"><T className="w-[13px] text-[11.5px] font-semibold">75</T></div></div>
      </TaskApp>
      <TaskApp run>
        <Ico vb="0 0 30 27" className="h-[27px] w-[30px]"><g stroke="none"><path d="M0 2q0-2 2-2h8l3 3v4H0z" fill="#dc9c08" /><path d="M0 5h12l2-2h14q2 0 2 2v20q0 2-2 2H2q-2 0-2-2z" fill="#fccb3c" /><path d="M5 27v-5q0-3 3-3h14q3 0 3 3v5z" fill="#1574d0" /><path d="M9 22h12v1.500H9z" fill="#0b4d9c" /></g></Ico>
      </TaskApp>
      <TaskApp>
        <Ico vb="0 0 30 30" className="h-[30px] w-[30px]">
          <defs><linearGradient id="ed" x1="0" y1="0" x2="1" y2=".3"><stop offset="0" stopColor="#1a8ce0" /><stop offset=".6" stopColor="#2cc0dc" /><stop offset="1" stopColor="#62e068" /></linearGradient></defs>
          <g stroke="none"><path d="M0 14C1 5 8 0 15 0c9 0 15 6 15 13 0 5-4 8-8 8-5 0-5-2-4-4 2-3-1-7-5-7C7 8 2 11 0 14z" fill="url(#ed)" /><path d="M0 14c2-5 7-7 12-5 3 1 5 3 4 6-3 5 2 12 11 8-3 5-8 7-12 7C6 30-1 23 0 14z" fill="#0e66c0" /><path d="M10 13c-4 7 0 15 7 17 5-1 8-4 10-7-8 3-14 0-15-7z" fill="#0a3f92" /></g>
        </Ico>
      </TaskApp>
      <TaskApp>
        <Ico vb="0 0 28 29" className="h-[29px] w-7"><path d="M8 6V1.500h12V6" stroke="#2aa8ec" strokeWidth="2.200" /><rect y="5" width="28" height="24" rx="3" fill="#f4f4f4" stroke="none" /><g stroke="none"><path d="M8.500 11h5v5h-5z" fill="#f04e24" /><path d="M14.500 11h5v5h-5z" fill="#7cb808" /><path d="M8.500 17h5v5h-5z" fill="#00a2ea" /><path d="M14.500 17h5v5h-5z" fill="#fcb800" /></g></Ico>
      </TaskApp>
      <TaskApp>
        <Ico vb="0 0 30 28" className="h-7 w-[30px]"><g stroke="none"><path d="M0 10L15 0l15 10v18H0z" fill="#0d5cae" /><path d="M3 10h24L15 20z" fill="#f4f4f4" /><path d="M0 10l15 10L30 10v18H0z" fill="#2aaaf0" /><path d="M30 10v18L7 14l8 5z" fill="#1c8ee0" opacity=".6" /><path d="M4 10h22L15 19z" fill="#f6f6f6" /></g></Ico>
      </TaskApp>
      <TaskApp run>
        <Ico vb="0 0 36 32" className="ml-[7px] h-8 w-9"><g stroke="none"><circle cx="15" cy="17" r="15" fill="#fbc116" /><path d="M15 17L2 9.500A15 15 0 0 1 28 9.500H15z" fill="#e33b2e" /><path d="M2 9.500A15 15 0 0 0 15 32l6.500-11L15 17z" fill="#249a48" /><circle cx="15" cy="17" r="7.200" fill="#fff" /><circle cx="15" cy="17" r="5.700" fill="#3f7ee8" /><circle cx="26" cy="8" r="9.500" fill="#c9c2ba" /><path d="M20 16q0-8 6-8t6 8q-6 4-12 0z" fill="#26262a" /><circle cx="26" cy="4.500" r="3" fill="#8b5a44" /></g></Ico>
      </TaskApp>
      <TaskApp run><VmLogo className="h-[30px] w-[30px]" /></TaskApp>
      <TaskApp run>
        <Ico vb="0 0 23 30" className="h-[30px] w-[23px]"><g stroke="none"><path d="M0 26h23v4H0z" fill="#a84e12" /><rect y="3" width="23" height="24" rx="1" fill="#5ac8e4" /><path d="M1 26h21v1.500H1z" fill="#e8f4f8" /></g><path d="M4 10h15M4 15h15M4 20h15" stroke="#0d5878" strokeWidth="2" /><path d="M2.500 0v4M7 0v4M11.500 0v4M16 0v4M20.500 0v4" stroke="#2a9cc0" strokeWidth="1.500" /></Ico>
      </TaskApp>
      <Ico vb="0 0 14 8" sw={1.8} className="ml-[138px] h-2 w-3.5"><path d="M0 8l7-7 7 7" /></Ico>
      <Ico vb="0 0 20 17" className="ml-[23px] mt-1 h-[17px] w-5"><g stroke="none"><path d="M5 5q2-5 7-5t6 5q2 1 2 3l-12 4z" fill="#8c9299" /><path d="M4 13q-4-1-4-4 0-4 5-4 2-3 6-1 3 3 3 9z" fill="#d3d6d8" /><circle cx="14.500" cy="11.500" r="5.700" fill="#dc2430" /></g><path d="M12.500 9.500l4 4M16.500 9.500l-4 4" stroke="#fff" strokeWidth="1.400" /></Ico>
      <T className="ml-6 w-[29px] text-[14.5px]">ENG</T>
      <Ico vb="0 0 20 16" sw={1.6} className="ml-[22px] h-4 w-5"><path d="M.5 6Q10-4 19.500 6M3.500 9q6.500-7 13 0M6.500 12q3.500-4 7 0" /><circle cx="10" cy="14" r="1.700" fill="currentColor" stroke="none" /></Ico>
      <Ico vb="0 0 19 16" sw={1.4} className="ml-[10px] h-4 w-[19px]"><path d="M1 5.500h3L9 1v14l-5-4.500H1z" strokeLinejoin="round" /><path d="M11.500 5q2 3 0 6M14 3q3.500 5 0 10" /><path d="M16.500 1q4.500 7 0 14" opacity=".35" /></Ico>
      <Ico vb="0 0 20 16" sw={1.5} className="ml-[11px] h-4 w-5 pb-px"><path d="M6 3h9q2 0 2 2v8q0 2-2 2H3q-2 0-2-2V9M18 7h1v4h-1" /><path d="M8 6h6v6H4V9h3z" fill="currentColor" stroke="none" /><path d="M4-1L0 5h2.500L1 9l5-5.500H3.500z" fill="currentColor" stroke="none" /></Ico>
      <div className="mb-[3px] ml-[20px] flex w-[69px] shrink-0 flex-col items-end"><T className="w-[62px]">12:30 PM</T><T className="mt-[5px] w-[69px]">6/21/2024</T></div>
      <Ico vb="0 0 16 19" className="ml-3 h-[19px] w-4"><path d="M8 0q6 0 6 7v5l2 4H0l2-4V7q0-7 6-7zM5.500 17h5q-.5 2-2.500 2t-2.500-2z" fill="#93e4ff" stroke="none" /></Ico>
      <Ico vb="0 0 29 28" className="ml-[23px] h-7 w-[29px]">
        <defs><linearGradient id="cp" x1="0" y1="0" x2="0" y2="1"><stop offset="0" stopColor="#1aa0f0" /><stop offset=".6" stopColor="#3cc46c" /><stop offset="1" stopColor="#f4c820" /></linearGradient><linearGradient id="cq" x1="0" y1="0" x2="0" y2="1"><stop offset="0" stopColor="#b45cf4" /><stop offset="1" stopColor="#fc7078" /></linearGradient></defs>
        <g stroke="none"><path d="M8 0h10q3 0 3 6l-8 0-4 13H3q-4 0-3-4L4 4q1-4 4-4z" fill="url(#cp)" /><path d="M15 0h3q3 0 4 7h-6z" fill="#1848c4" /><path d="M20 7h5q4 0 3 4l-2 9H14l3-9q1-4 3-4z" fill="url(#cq)" /><rect x="6" y="19" width="23" height="9" rx="2" fill="#fcc40c" /></g>
        <text x="17.500" y="26.500" textAnchor="middle" fontSize="8.500" fontWeight="800" fill="#111" stroke="none">PRE</text>
      </Ico>
    </div>
  );
}

export default function App() {
  return (
    <div className="flex h-[1080px] w-[1920px] flex-col overflow-hidden bg-[#282828] font-['Noto_Sans',sans-serif]">
      <TitleBar />
      <MenuBar />
      <div className="flex h-[918px] shrink-0">
        <Library />
        <GuestScreen />
      </div>
      <StatusBar />
      <Taskbar />
    </div>
  );
}
